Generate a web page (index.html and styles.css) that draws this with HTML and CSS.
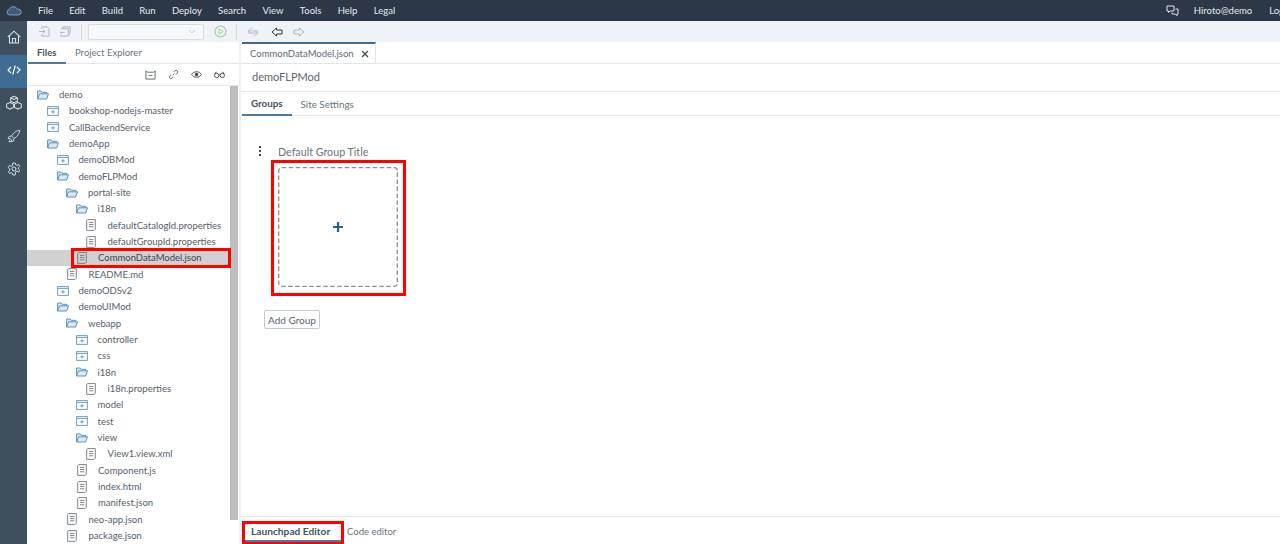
FILE: index.html
```html
<!DOCTYPE html>
<html lang="en">
<head>
<meta charset="utf-8">
<title>SAP Web IDE</title>
<link rel="stylesheet" href="styles.css">
</head>
<body>
<svg class="defs" width="0" height="0">
  <symbol id="fo" viewBox="0 0 12 10"><path d="M.6 9V1h3.600l1 1.300h4.600v1.500M.6 9l2-5.200h8.900L9.600 9z" fill="#dbe8f2" stroke="#5d93ba" stroke-width="1"/></symbol>
  <symbol id="fc" viewBox="0 0 12 10"><path d="M.6 9.400V.6h10.800v8.800zM.6 2.400h10.800M4.200 5.900h3.600M6 4.200v3.400" fill="none" stroke="#5d93ba" stroke-width=".9"/></symbol>
  <symbol id="doc" viewBox="0 0 10 12"><path d="M1.500.6h7.800v9.600l-1.200 1.200H.7V1.400zM3 3.400h4.400M3 5.600h4.400M3 7.800h4.400" fill="none" stroke="#70777d" stroke-width=".9"/></symbol>
</svg>

<header class="topbar">
  <svg class="logo" viewBox="0 0 20 10"><path d="M5 9.400a3 3 0 0 1-.4-5.900A5 5 0 0 1 13.800 3 3.200 3.200 0 0 1 15.500 9.400z" fill="#3d5c78" stroke="#7ea3c2" stroke-width="1.100"/></svg>
  <nav class="menu">
    <span>File</span><span>Edit</span><span>Build</span><span>Run</span><span>Deploy</span><span>Search</span><span>View</span><span>Tools</span><span>Help</span><span>Legal</span>
  </nav>
  <div class="user">
    <svg class="chat" viewBox="0 0 13 12"><path d="M1 1h7v5H4L2.500 7.500V6H1zM9.500 4H12v5h-1v1.700L9.500 9H6V7.500" fill="none" stroke="#dfe5ea" stroke-width="1"/></svg>
    <span class="username">Hiroto@demo</span>
    <span class="logout">Logout</span>
  </div>
</header>

<div class="main">
  <aside class="rail">
    <div class="rail-item"><svg viewBox="0 0 14 14"><path d="M.8 7 7 1.200 13.200 7M2.500 6v7h9V6M5.500 13V8.500h3V13" fill="none" stroke="#d5dde4" stroke-width="1.100"/></svg></div>
    <div class="rail-item active"><svg viewBox="0 0 14 12"><path d="M4 3 1 6l3 3M10 3l3 3-3 3M8.300 1.500 5.700 10.500" fill="none" stroke="#fff" stroke-width="1.100"/></svg></div>
    <div class="rail-item"><svg class="cubes" viewBox="0 0 16 14"><path d="M8 1l3 1.400v3L8 6.800 5 5.400v-3zM4.500 6.600l3 1.400v3l-3 1.400-3-1.400V8zM11.500 6.600l3 1.400v3l-3 1.400-3-1.400V8zM5 2.400l3 1.400 3-1.400" fill="none" stroke="#d5dde4" stroke-width=".9"/></svg></div>
    <div class="rail-item"><svg viewBox="0 0 14 14"><path d="M12.800 1.200C9.500 1.500 6.500 3.500 4.500 7l2.500 2.500c3.500-2 5.500-5 5.800-8.300zM4.500 7 2 7.500 1 9.500l2.500-.3M7 9.500 6.500 12l-2 1 .3-2.500M4 10c-1 .3-1.700 1.300-2 3 1.700-.3 2.700-1 3-2" fill="none" stroke="#d5dde4" stroke-width=".9"/></svg></div>
    <div class="rail-item"><svg viewBox="0 0 14 14"><path d="M5.800 1h2.400l.4 1.800 1.300.6 1.600-1 1.200 2-1.400 1.200v1.400l1.400 1.200-1.200 2-1.600-1-1.300.6L8.200 13H5.800l-.4-1.800-1.300-.6-1.600 1-1.200-2 1.400-1.200V7L1.300 5.400l1.200-2 1.600 1 1.300-.6z" fill="none" stroke="#d5dde4" stroke-width="1"/><circle cx="7" cy="7" r="2" fill="none" stroke="#d5dde4"/></svg></div>
  </aside>

  <div class="workspace">
    <div class="toolbar">
      <svg class="tb tb-first" viewBox="0 0 12 12"><path d="M3 3V1h6l2 2v8H3V9M0 6h6M4.500 4.200 6.500 6l-2 1.800" fill="none" stroke="#a9b0b6"/></svg>
      <svg class="tb" viewBox="0 0 12 12"><path d="M3 3V1h8v8h-1M1 3h8v8H1V9M0 7h5" fill="none" stroke="#a9b0b6"/></svg>
      <i class="sep"></i>
      <div class="select"><svg viewBox="0 0 10 6"><path d="M1 1l4 4 4-4" fill="none" stroke="#b5bac0"/></svg></div>
      <svg class="run" viewBox="0 0 14 14"><circle cx="7" cy="7" r="6" fill="none" stroke="#9ccd93" stroke-width="1.100"/><path d="M5.300 4v6l4.700-3z" fill="none" stroke="#9ccd93"/></svg>
      <i class="sep sep-b"></i>
      <svg class="arrow first-arrow" viewBox="0 0 12 10"><path d="M5 1 1 4l4 3M1 4h10M7 3l4 3-4 3M1 6h10" fill="none" stroke="#c6b7dc"/></svg>
      <svg class="arrow" viewBox="0 0 12 10"><path d="M5.500 1 1 5l4.500 4V7H11V3H5.500z" fill="none" stroke="#33393f"/></svg>
      <svg class="arrow" viewBox="0 0 12 10"><path d="M6.500 1 11 5 6.500 9V7H1V3h5.500z" fill="none" stroke="#b0b6bc"/></svg>
    </div>

    <div class="panes">
      <section class="left">
        <div class="tabs left-tabs">
          <span class="tab on">Files</span>
          <span class="tab">Project Explorer</span>
        </div>
        <div class="file-tools">
          <svg viewBox="0 0 12 12"><path d="M1 2l1.500 1.500h7L11 2v9H1zM4 7h4" fill="none" stroke="#5b646c"/></svg>
          <svg viewBox="0 0 12 12"><path d="M5 7 7 5M3.500 6 1.800 7.700a1.800 1.800 0 0 0 2.500 2.500L6 8.500M6 3.500 7.700 1.800a1.800 1.800 0 0 1 2.500 2.500L8.500 6" fill="none" stroke="#5b646c"/></svg>
          <svg viewBox="0 0 12 12"><path d="M.5 6C2 3.800 4 3 6 3s4 .8 5.500 3C10 8.200 8 9 6 9S2 8.200.5 6z" fill="none" stroke="#3f474e"/><circle cx="6" cy="6" r="1.900" fill="#3f474e"/></svg>
          <svg viewBox="0 0 12 12"><circle cx="3" cy="7" r="2.400" fill="none" stroke="#3f474e"/><circle cx="9" cy="7" r="2.400" fill="none" stroke="#3f474e"/><path d="M5.300 6.500h1.400M1 5.500 2.500 3M11 5.500 9.500 3" fill="none" stroke="#3f474e"/></svg>
        </div>
        <div class="tree-wrap">
          <ul class="tree">
            <li class="l0"><svg><use href="#fo"/></svg>demo</li>
            <li class="l1"><svg><use href="#fc"/></svg>bookshop-nodejs-master</li>
            <li class="l1"><svg><use href="#fc"/></svg>CallBackendService</li>
            <li class="l1"><svg><use href="#fo"/></svg>demoApp</li>
            <li class="l2"><svg><use href="#fc"/></svg>demoDBMod</li>
            <li class="l2"><svg><use href="#fo"/></svg>demoFLPMod</li>
            <li class="l3"><svg><use href="#fo"/></svg>portal-site</li>
            <li class="l4"><svg><use href="#fo"/></svg>i18n</li>
            <li class="l5"><svg class="d"><use href="#doc"/></svg>defaultCatalogId.properties</li>
            <li class="l5"><svg class="d"><use href="#doc"/></svg>defaultGroupId.properties</li>
            <li class="l4 selected"><svg class="d"><use href="#doc"/></svg>CommonDataModel.json<b class="mark"></b></li>
            <li class="l3"><svg class="d"><use href="#doc"/></svg>README.md</li>
            <li class="l2"><svg><use href="#fc"/></svg>demoODSv2</li>
            <li class="l2"><svg><use href="#fo"/></svg>demoUIMod</li>
            <li class="l3"><svg><use href="#fo"/></svg>webapp</li>
            <li class="l4"><svg><use href="#fc"/></svg>controller</li>
            <li class="l4"><svg><use href="#fc"/></svg>css</li>
            <li class="l4"><svg><use href="#fo"/></svg>i18n</li>
            <li class="l5"><svg class="d"><use href="#doc"/></svg>i18n.properties</li>
            <li class="l4"><svg><use href="#fc"/></svg>model</li>
            <li class="l4"><svg><use href="#fc"/></svg>test</li>
            <li class="l4"><svg><use href="#fo"/></svg>view</li>
            <li class="l5"><svg class="d"><use href="#doc"/></svg>View1.view.xml</li>
            <li class="l4"><svg class="d"><use href="#doc"/></svg>Component.js</li>
            <li class="l4"><svg class="d"><use href="#doc"/></svg>index.html</li>
            <li class="l4"><svg class="d"><use href="#doc"/></svg>manifest.json</li>
            <li class="l3"><svg class="d"><use href="#doc"/></svg>neo-app.json</li>
            <li class="l3"><svg class="d"><use href="#doc"/></svg>package.json</li>
          </ul>
          <div class="scroll"><div class="thumb"></div></div>
        </div>
      </section>

      <section class="right">
        <div class="editor-tabs">
          <div class="editor-tab">CommonDataModel.json<svg viewBox="0 0 8 8"><path d="M1 1l6 6M7 1 1 7" stroke="#3f474e" stroke-width="1.200"/></svg></div>
        </div>
        <div class="title">demoFLPMod</div>
        <div class="tabs sub-tabs">
          <span class="tab on">Groups</span>
          <span class="tab">Site Settings</span>
        </div>
        <div class="canvas">
          <div class="group-head">
            <span class="dots"><i></i><i></i><i></i></span>
            <span>Default Group Title</span>
          </div>
          <div class="tile-mark">
            <div class="tile">
              <svg class="dash" viewBox="0 0 120 120"><rect x=".7" y=".7" width="118.600" height="118.600" rx="3" fill="none" stroke="#8a8f94" stroke-width="1.300" stroke-dasharray="4.500 2.500"/></svg>
              <svg class="plus" viewBox="0 0 10 10"><path d="M5 0v10M0 5h10" stroke="#2f5f8a" stroke-width="2.200"/></svg>
            </div>
          </div>
          <button class="add">Add Group</button>
        </div>
        <div class="footer">
          <span class="foot-tab on">Launchpad Editor</span>
          <span class="foot-tab">Code editor</span>
        </div>
      </section>
    </div>
  </div>
</div>
</body>
</html>
```
FILE: styles.css
```css
* { box-sizing: border-box; }
html, body { height: 100%; }
body {
  margin: 0;
  height: 544px;
  overflow: hidden;
  font-family: Lato, "Open Sans", sans-serif;
  font-size: 9.5px;
  color: #4f5a63;
  background: #fff;
  display: flex;
  flex-direction: column;
}
.defs { position: absolute; }

.topbar {
  height: 21px;
  flex: none;
  background: #2c3846;
  color: #e6eaee;
  display: flex;
  align-items: center;
  white-space: nowrap;
}
.logo { width: 18px; height: 10px; margin-left: 5px; flex: none; }
.menu { display: flex; gap: 16.300px; margin-left: 15px; }
.user { margin-left: auto; display: flex; align-items: center; margin-right: -18px; }
.chat { width: 13px; height: 12px; margin-right: 15px; }
.logout { margin-left: 17px; }

.main { flex: 1; display: flex; min-height: 0; }
.rail { width: 27px; flex: none; background: #3f4f5e; padding-top: 1px; }
.rail-item { height: 33px; display: flex; align-items: center; justify-content: center; padding-bottom: 3px; }
.rail-item.active { background: #3f6c92; }
.rail-item svg { width: 14px; height: 14px; }
.rail-item svg.cubes { width: 18px; height: 16px; }

.workspace { flex: 1; min-width: 0; display: flex; flex-direction: column; }
.toolbar {
  height: 21px;
  flex: none;
  background: #eff2f6;
  display: flex;
  align-items: center;
}
.tb { width: 11px; height: 11px; margin-right: 10px; }
.tb-first { margin-left: 12px; }
.sep { width: 1px; height: 16px; background: #d5d9de; margin-right: 6px; }
.sep-b { margin: 0 10px 0 9px; }
.select {
  width: 116px;
  height: 16px;
  background: #f6f8fa;
  border: 1px solid #d8dce1;
  border-radius: 2px;
  margin-right: 10px;
  display: flex;
  align-items: center;
  justify-content: flex-end;
  padding-right: 7px;
}
.select svg { width: 8px; height: 5px; }
.run { width: 13px; height: 13px; }
.arrow { width: 12px; height: 10px; margin-right: 10px; }
.first-arrow { margin-right: 12px; }

.panes { flex: 1; min-height: 0; display: flex; background: #eef0f2; }
.left { width: 212px; flex: none; background: #fff; display: flex; flex-direction: column; }
.tabs {
  display: flex;
  align-items: stretch;
  background: #fff;
  border-bottom: 1px solid #e3e5e8;
  flex: none;
}
.tab { display: flex; align-items: center; padding: 0 9px; margin-bottom: -1px; border-bottom: 1px solid transparent; color: #6a747c; }
.tab.on { color: #47525b; font-weight: 700; border-bottom: 2px solid #4c7b9f; }
.left-tabs { height: 22px; padding-left: 1px; }
.left-tabs .tab.on { width: 38px; }
.file-tools {
  height: 22px;
  flex: none;
  display: flex;
  align-items: center;
  justify-content: flex-end;
  gap: 12px;
  padding-right: 14px;
  border-bottom: 1px solid #e6e8ea;
}
.file-tools svg { width: 11px; height: 11px; }

.tree-wrap { flex: 1; min-height: 0; display: flex; overflow: hidden; }
.tree { flex: 1; min-width: 0; list-style: none; margin: 0; padding: .5px 0 0; }
.tree li {
  position: relative;
  height: 16.33px;
  display: flex;
  align-items: center;
  white-space: nowrap;
  color: #56606a;
}
.tree svg { width: 12px; height: 10px; margin-right: 10px; flex: none; }
.tree svg.d { width: 10px; height: 12px; margin-right: 11.500px; margin-left: 1px; }
.l0 { padding-left: 10px; }
.l1 { padding-left: 20px; }
.l2 { padding-left: 29.500px; }
.l3 { padding-left: 39px; }
.l4 { padding-left: 48.500px; }
.l5 { padding-left: 58px; }
.tree li.selected { background: #d1d1d1; color: #3d464e; }
.mark {
  position: absolute;
  left: 44px;
  top: -2px;
  width: 160px;
  height: 20px;
  border: 3px solid #f00;
}
.scroll { width: 8px; flex: none; margin-right: 1px; }
.thumb { height: 434px; background: #bdbdbd; }

.right { flex: 1; min-width: 0; margin-left: 2px; background: #fff; display: flex; flex-direction: column; }
.editor-tabs {
  height: 22px;
  flex: none;
  border-bottom: 1px solid #e3e5e8;
  padding-left: 1px;
  display: flex;
}
.editor-tab {
  width: 134px;
  border-top: 2px solid #3f6c92;
  border-right: 1px solid #e3e5e8;
  padding-left: 8px;
  display: flex;
  align-items: center;
  gap: 7px;
  color: #616b74;
}
.editor-tab svg { width: 8px; height: 8px; }
.title {
  height: 28px;
  flex: none;
  font-size: 11px;
  line-height: 26px;
  padding-left: 11px;
  color: #5c666f;
  border-bottom: 1px solid #e3e5e8;
}
.sub-tabs { height: 24px; padding-left: 1px; font-size: 9.800px; }
.canvas { flex: 1; min-height: 0; padding: 27px 0 0 23px; }
.group-head { display: flex; align-items: center; height: 16px; font-size: 10.700px; color: #6a747c; }
.dots { display: flex; flex-direction: column; gap: 2px; width: 8px; margin-left: -8px; margin-right: 14px; align-items: center; }
.dots i { width: 2px; height: 2px; background: #3f474e; }
.tile-mark {
  width: 135px;
  height: 136px;
  margin: 1px 0 14px 7px;
  border: 3px solid #f00;
  padding: 4px;
}
.tile {
  position: relative;
  width: 120px;
  height: 120px;
  display: flex;
  align-items: center;
  justify-content: center;
}
.dash { position: absolute; inset: 0; width: 120px; height: 120px; }
.plus { width: 10px; height: 10px; }
.add {
  display: block;
  width: 56px;
  height: 19px;
  padding: 0;
  background: #fff;
  border: 1px solid #c7cbcf;
  border-radius: 2px;
  font: inherit;
  font-size: 10px;
  color: #5a646d;
}
.footer {
  height: 28px;
  flex: none;
  border-top: 1px solid #e3e5e8;
  padding: 4px 0 0 1px;
  display: flex;
}
.foot-tab { display: flex; align-items: center; height: 24px; color: #6a747c; padding: 0 8px 4px 3px; white-space: nowrap; }
.foot-tab.on {
  width: 102px;
  padding-left: 6px;
  font-size: 10.200px;
  font-weight: 700;
  color: #47525b;
  border: 3px solid #f00;
  box-shadow: inset 0 -2px 0 #4c7b9f;
}
```
